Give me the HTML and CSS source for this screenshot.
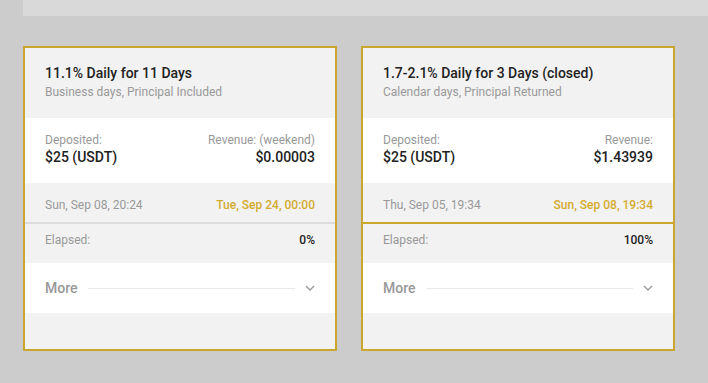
FILE: index.html
```html
<!DOCTYPE html>
<html lang="en">
<head>
  <meta charset="UTF-8" />
  <title>Deposits</title>
  <link rel="stylesheet" href="styles.css">
</head>
<body>
  <div class="top-bar"></div>

  <div class="plans">
    <div class="plan-card">
      <div class="plan-head">
        <h3>11.1% Daily for 11 Days</h3>
        <p>Business days, Principal Included</p>
      </div>
      <div class="plan-amounts">
        <div>
          <span class="label">Deposited:</span>
          <strong>$25 (USDT)</strong>
        </div>
        <div class="right">
          <span class="label">Revenue: (weekend)</span>
          <strong>$0.00003</strong>
        </div>
      </div>
      <div class="plan-dates">
        <span>Sun, Sep 08, 20:24</span>
        <span class="end">Tue, Sep 24, 00:00</span>
      </div>
      <div class="progress"><div class="fill" style="width: 0%"></div></div>
      <div class="plan-elapsed">
        <span>Elapsed:</span>
        <strong>0%</strong>
      </div>
      <div class="plan-more">
        <span>More</span>
        <div class="line"></div>
        <svg width="10" height="6" viewBox="0 0 10 6"><path d="M1 1l4 4 4-4" fill="none" stroke="#999" stroke-width="1.3"/></svg>
      </div>
      <div class="plan-foot"></div>
    </div>

    <div class="plan-card">
      <div class="plan-head">
        <h3>1.7-2.1% Daily for 3 Days (closed)</h3>
        <p>Calendar days, Principal Returned</p>
      </div>
      <div class="plan-amounts">
        <div>
          <span class="label">Deposited:</span>
          <strong>$25 (USDT)</strong>
        </div>
        <div class="right">
          <span class="label">Revenue:</span>
          <strong>$1.43939</strong>
        </div>
      </div>
      <div class="plan-dates">
        <span>Thu, Sep 05, 19:34</span>
        <span class="end">Sun, Sep 08, 19:34</span>
      </div>
      <div class="progress"><div class="fill" style="width: 100%"></div></div>
      <div class="plan-elapsed">
        <span>Elapsed:</span>
        <strong>100%</strong>
      </div>
      <div class="plan-more">
        <span>More</span>
        <div class="line"></div>
        <svg width="10" height="6" viewBox="0 0 10 6"><path d="M1 1l4 4 4-4" fill="none" stroke="#999" stroke-width="1.3"/></svg>
      </div>
      <div class="plan-foot"></div>
    </div>
  </div>
</body>
</html>
```

FILE: styles.css
```css
* {
  box-sizing: border-box;
  margin: 0;
  padding: 0;
}
body {
  background: #cccccc;
  font-family: Roboto, 'Liberation Sans', sans-serif;
  color: #222;
  height: 383px;
  overflow: hidden;
}
.top-bar {
  margin-left: 23px;
  height: 16px;
  background: #d9d9d9;
}
.plans {
  display: flex;
  gap: 24px;
  padding: 30px 0 0 23px;
}
.plan-card {
  width: 314px;
  border: 2px solid #c9a62e;
  background: #f2f2f2;
}
.plan-head {
  height: 70px;
  padding: 16px 20px 0;
}
.plan-head h3 {
  font-size: 14px;
  font-weight: 500;
  line-height: 18px;
  color: #222;
}
.plan-head p {
  font-size: 12px;
  line-height: 16px;
  margin-top: 2px;
  color: #999;
}
.plan-amounts {
  background: #fff;
  height: 65px;
  padding: 14px 20px 0;
  display: flex;
  justify-content: space-between;
}
.plan-amounts .label {
  display: block;
  font-size: 12px;
  line-height: 16px;
  color: #999;
}
.plan-amounts strong {
  display: block;
  font-size: 14px;
  font-weight: 500;
  line-height: 18px;
}
.plan-amounts .right {
  text-align: right;
}
.plan-dates {
  height: 39px;
  padding: 14px 20px 0;
  display: flex;
  justify-content: space-between;
  font-size: 12px;
  line-height: 16px;
  color: #999;
}
.plan-dates .end {
  color: #d4ab2e;
  font-weight: 500;
}
.progress {
  height: 2px;
  background: #dcdcdc;
}
.progress .fill {
  height: 100%;
  background: #c9a62e;
}
.plan-elapsed {
  height: 39px;
  padding: 8px 20px 0;
  display: flex;
  justify-content: space-between;
  font-size: 12px;
  line-height: 16px;
  color: #999;
}
.plan-elapsed strong {
  color: #222;
  font-weight: 500;
}
.plan-more {
  background: #fff;
  height: 50px;
  padding: 0 20px;
  display: flex;
  align-items: center;
  gap: 10px;
}
.plan-more span {
  font-size: 14px;
  font-weight: 500;
  color: #999;
}
.plan-more .line {
  flex: 1;
  height: 1px;
  background: #e8e8e8;
}
.plan-foot {
  height: 36px;
}
```
